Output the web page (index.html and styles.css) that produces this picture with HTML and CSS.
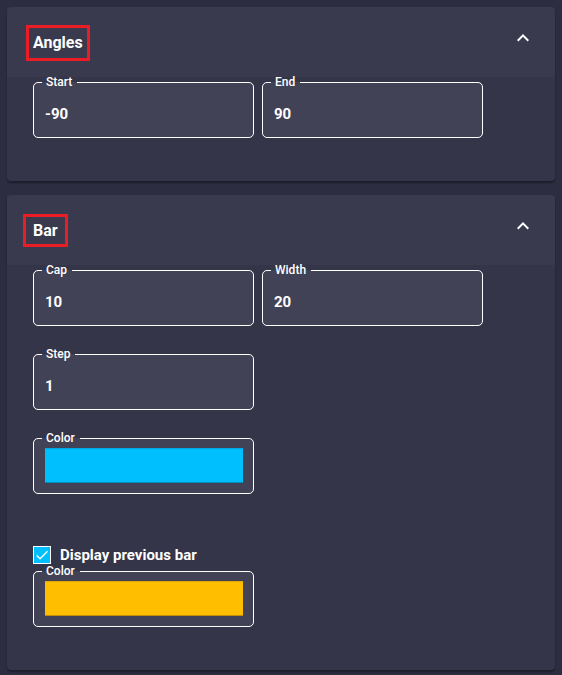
FILE: index.html
```html
<!DOCTYPE html>
<html lang="en">
<head>
    <meta charset="UTF-8">
    <meta name="viewport" content="width=device-width, initial-scale=1.0">
    <title>Gauge Settings</title>
    <link rel="stylesheet" href="styles.css">
</head>
<body>
    <!-- Angles panel -->
    <section class="panel">
        <div class="panel-header">
            <h2 class="panel-title title-angles">Angles</h2>
            <svg class="chevron" viewBox="0 0 24 24" width="24" height="24">
                <path d="M12 8l-6 6 1.41 1.41L12 10.83l4.59 4.58L18 14z" fill="#fff"/>
            </svg>
        </div>
        <div class="panel-body">
            <div class="field-row">
                <fieldset class="field">
                    <legend>Start</legend>
                    <div class="field-value">-90</div>
                </fieldset>
                <fieldset class="field">
                    <legend>End</legend>
                    <div class="field-value">90</div>
                </fieldset>
            </div>
        </div>
    </section>

    <!-- Bar panel -->
    <section class="panel">
        <div class="panel-header">
            <h2 class="panel-title title-bar">Bar</h2>
            <svg class="chevron" viewBox="0 0 24 24" width="24" height="24">
                <path d="M12 8l-6 6 1.41 1.41L12 10.83l4.59 4.58L18 14z" fill="#fff"/>
            </svg>
        </div>
        <div class="panel-body">
            <div class="field-row">
                <fieldset class="field">
                    <legend>Cap</legend>
                    <div class="field-value">10</div>
                </fieldset>
                <fieldset class="field">
                    <legend>Width</legend>
                    <div class="field-value">20</div>
                </fieldset>
            </div>
            <div class="field-row">
                <fieldset class="field">
                    <legend>Step</legend>
                    <div class="field-value">1</div>
                </fieldset>
            </div>
            <div class="field-row">
                <fieldset class="field color-field">
                    <legend>Color</legend>
                    <div class="swatch swatch-cyan"></div>
                </fieldset>
            </div>

            <label class="check-row">
                <span class="checkbox">
                    <svg viewBox="0 0 24 24" width="16" height="16">
                        <path d="M9 16.17L4.83 12l-1.42 1.41L9 19 21 7l-1.41-1.41z" fill="#fff"/>
                    </svg>
                </span>
                Display previous bar
            </label>
            <div class="field-row">
                <fieldset class="field color-field">
                    <legend>Color</legend>
                    <div class="swatch swatch-yellow"></div>
                </fieldset>
            </div>
        </div>
    </section>
</body>
</html>
```

FILE: styles.css
```css
/* Page */
body {
    background-color: #2c2d41;
    margin: 0;
    padding: 7px;
    color: white;
    font-family: Roboto, "Liberation Sans", sans-serif;
}

/* Panels */
.panel {
    background-color: #343549;
    border-radius: 4px;
    box-shadow: 0 2px 2px rgba(0, 0, 0, 0.35);
    margin-bottom: 14px;
}

.panel-header {
    background-color: #393a4e;
    border-radius: 4px 4px 0 0;
    height: 70px;
    display: flex;
    align-items: center;
    justify-content: space-between;
    padding: 0 20px 0 26px;
}

.panel-title {
    margin: 0;
    font-size: 16px;
    font-weight: 700;
    line-height: 19px;
    border: 3px solid #ec1c24;
}

/* red annotation boxes around the titles */
.title-angles {
    padding: 5px 4px 6px;
    margin: 2px 0 0 -7px;
}

.title-bar {
    padding: 4px 7px 4px;
    margin: 0 0 0 -10px;
}

.chevron {
    margin-bottom: 8px;
}

.panel-body {
    margin-top: -2px;
    padding: 0 26px 43px;
}

/* Outlined fields */
.field-row {
    display: flex;
    gap: 8px;
    margin-bottom: 21px;
}

.field-row:last-child {
    margin-bottom: 0;
}

.field {
    box-sizing: border-box;
    width: 221px;
    margin: 0;
    padding: 15px 11px 13px;
    border: 1px solid #fff;
    border-radius: 5px;
    background-color: #414256;
    min-width: 0;
}

.field legend {
    font-size: 12px;
    font-weight: 500;
    line-height: 14px;
    padding: 0 5px 0 4px;
    margin-left: -3px;
}

.field-value {
    font-size: 15px;
    font-weight: 700;
    line-height: 20px;
}

.color-field {
    padding: 3px 10px 10px 11px;
}

.swatch {
    box-sizing: border-box;
    height: 35px;
    border-top: 1px solid rgba(0, 0, 0, 0.12);
    border-bottom: 1px solid rgba(0, 0, 0, 0.25);
}

.swatch-cyan {
    background-color: #00bfff;
}

.swatch-yellow {
    background-color: #ffbf00;
}

/* Checkbox */
.check-row {
    display: flex;
    align-items: center;
    gap: 9px;
    margin-top: 52px;
    font-size: 15px;
    font-weight: 700;
    line-height: 18px;
}

.checkbox {
    box-sizing: border-box;
    width: 18px;
    height: 18px;
    background-color: #00bfff;
    border: 1px solid #fff;
    display: flex;
    align-items: center;
    justify-content: center;
}
```
